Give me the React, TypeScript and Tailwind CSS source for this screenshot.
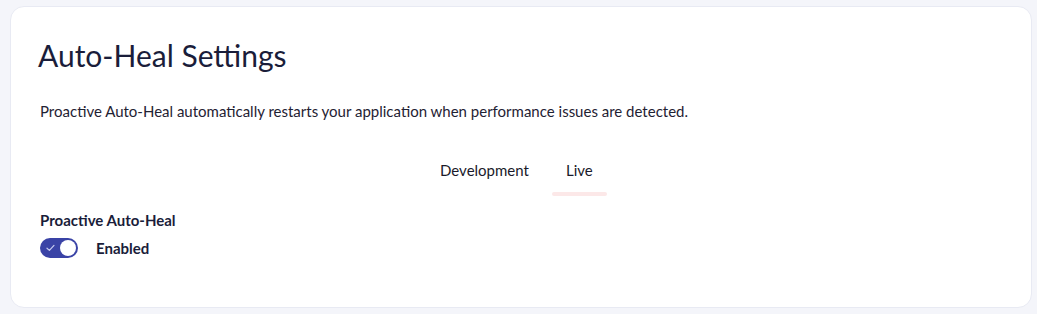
export default function App() {
  return (
    <div className="min-h-[314px] bg-[#f4f5fa] pl-[10px] pr-[5px] pt-[6px] pb-[6px]" style={{ fontFamily: "Lato, 'Noto Sans', sans-serif" }}>
      <div className="h-[302px] rounded-[14px] border border-[#e8eaf3] bg-white px-[29px] pt-[30px]">
        <h1 className="-ml-[2px] text-[30px] leading-[36px] text-[#1a1d3a]">Auto-Heal Settings</h1>
        <p className="mt-[28px] text-[15px] leading-[20px] text-[#1f2233]">
          Proactive Auto-Heal automatically restarts your application when performance issues are detected.
        </p>
        <div className="mt-[36px] flex justify-center gap-[22px] pl-[4px] text-[15px] text-[#1a1a2a]">
          <div className="px-[1px] pb-[12px] pt-[2px]">Development</div>
          <div className="flex flex-col items-center">
            <div className="px-[14px] pb-[10px] pt-[2px]">Live</div>
            <div className="h-[4px] w-[55px] rounded-full bg-[#fce8e8]" />
          </div>
        </div>
        <div className="mt-[14px] text-[15px] font-bold leading-[20px] text-[#1a1d3a]">Proactive Auto-Heal</div>
        <div className="mt-[7px] flex items-center gap-[18px]">
          <div className="flex h-[20px] w-[38px] items-center justify-between rounded-full bg-[#3a43a6] pl-[6px] pr-[2px]">
            <svg width="9" height="8" viewBox="0 0 9 8" fill="none">
              <path d="M1 4.2 L3.4 6.4 L8 1.4" stroke="#c9cdf0" strokeWidth="1.2" strokeLinecap="round" strokeLinejoin="round" />
            </svg>
            <div className="h-[16px] w-[16px] rounded-full bg-white" />
          </div>
          <span className="text-[15px] font-bold text-[#1a1d3a]">Enabled</span>
        </div>
      </div>
    </div>
  );
}
